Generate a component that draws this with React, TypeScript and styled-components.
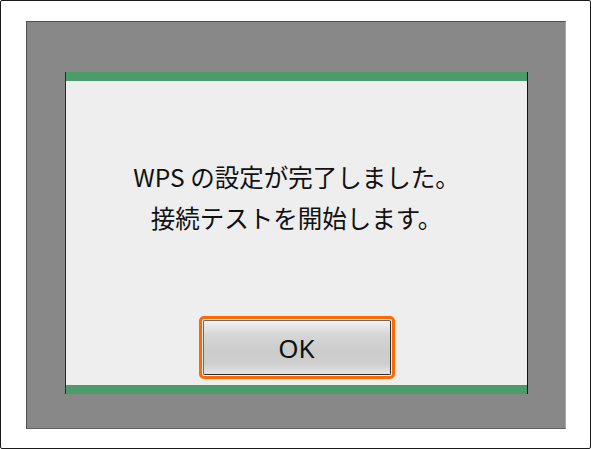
import React from 'react';
import styled, { createGlobalStyle } from 'styled-components';

const GlobalStyle = createGlobalStyle`
  html, body {
    margin: 0;
    padding: 0;
    background: #ffffff;
  }
  * {
    box-sizing: border-box;
  }
`;

const Frame = styled.div`
  width: 591px;
  height: 449px;
  border: 1px solid #1a1a1a;
  border-radius: 2px;
  background: #ffffff;
  padding: 20px 24px 19px 25px;
`;

const Screen = styled.div`
  width: 540px;
  height: 408px;
  background: #888888;
  border-top: 1px solid #505050;
  border-left: 1px solid #505050;
  border-right: 1px solid #a8a8a8;
  border-bottom: 1px solid #606060;
  padding: 50px 37px 34px 38px;
`;

const Dialog = styled.div`
  width: 463px;
  height: 322px;
  display: flex;
  flex-direction: column;
  background: #edeeed;
  border-left: 1px solid #2a2a2a;
  border-right: 1px solid #111111;
`;

const Bar = styled.div`
  height: 9px;
  flex: none;
  background: #4c9b6b;
`;

const Body = styled.div`
  flex: 1;
  display: flex;
  flex-direction: column;
  align-items: center;
  padding: 75px 0 6px;
`;

const Message = styled.p`
  margin: 0;
  font-family: "Noto Sans CJK JP", "Noto Sans", sans-serif;
  font-size: 24.5px;
  font-weight: 400;
  line-height: 41px;
  color: #111111;
  text-align: center;
`;

const Focus = styled.div`
  margin-top: auto;
  width: 196px;
  height: 63px;
  border: 3px solid #ff6a00;
  border-radius: 5px;
  padding: 1px;
  background: #edeeed;
`;

const Button = styled.button`
  width: 100%;
  height: 100%;
  border: 1px solid #2e2e2e;
  border-top-color: #6a6a6a;
  border-left-color: #6a6a6a;
  border-radius: 2px;
  background: linear-gradient(
    to bottom,
    #f2f2f2 0%,
    #d6d7d6 25%,
    #cbcccb 55%,
    #cdcecd 80%,
    #e4e4e4 100%
  );
  font-family: "Noto Sans", "Noto Sans CJK JP", sans-serif;
  font-size: 26px;
  font-weight: 400;
  color: #111111;
  padding: 0;
  cursor: pointer;
`;

export default function App() {
  return (
    <>
      <GlobalStyle />
      <Frame>
        <Screen>
          <Dialog>
            <Bar />
            <Body>
              <Message>WPS の設定が完了しました。</Message>
              <Message>接続テストを開始します。</Message>
              <Focus>
                <Button>OK</Button>
              </Focus>
            </Body>
            <Bar />
          </Dialog>
        </Screen>
      </Frame>
    </>
  );
}
